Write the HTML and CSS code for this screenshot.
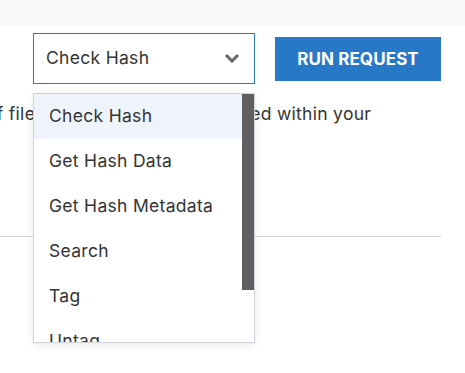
FILE: index.html
```html
<!DOCTYPE html>
<html lang="en">
  <head>
    <meta charset="UTF-8" />
    <meta name="viewport" content="width=device-width, initial-scale=1.0" />
    <link rel="stylesheet" href="styles.css">
    <title>Hash Request</title>
  </head>
  <body>
    <div class="topbar"></div>
    <div class="main">
      <div class="request-row">
        <div class="select">
          <span class="select-value">Check Hash</span>
          <svg class="chevron" width="16" height="10" viewBox="0 0 16 10">
            <path d="M2 2 L8 8 L14 2" fill="none" stroke="#666" stroke-width="3" />
          </svg>
        </div>
        <button class="run-btn">RUN REQUEST</button>
      </div>
      <p class="description">of files that have been processed within your</p>
      <hr class="divider" />

      <div class="dropdown">
        <ul class="options">
          <li class="option active">Check Hash</li>
          <li class="option">Get Hash Data</li>
          <li class="option">Get Hash Metadata</li>
          <li class="option">Search</li>
          <li class="option">Tag</li>
          <li class="option">Untag</li>
          <li class="option">Update Metadata</li>
        </ul>
        <div class="scroll-track">
          <div class="scroll-thumb"></div>
        </div>
      </div>
    </div>
  </body>
</html>
```

FILE: styles.css
```css
body {
  margin: 0;
  padding: 0;
  min-height: 373px;
  font-family: "Inter", "Noto Sans", sans-serif;
  color: #333;
  background-color: white;
}

.topbar {
  height: 26px;
  background-color: #f9fafa;
}

.main {
  position: relative;
  padding: 7px 24px 0 0;
}

.request-row {
  display: flex;
  align-items: center;
  gap: 20px;
  padding-left: 33px;
}

.select {
  box-sizing: border-box;
  width: 222px;
  height: 51px;
  border: 1px solid #2a78c8;
  display: flex;
  align-items: center;
  justify-content: space-between;
  padding: 0 14px 2px 12px;
  font-size: 17.5px;
  letter-spacing: 0.3px;
}

.chevron {
  display: block;
}

.run-btn {
  box-sizing: border-box;
  width: 166px;
  height: 44px;
  background-color: #2878c8;
  border: none;
  color: white;
  font-family: "Inter", sans-serif;
  font-weight: 700;
  font-size: 17px;
  letter-spacing: 0.1px;
  padding: 0;
}

.description {
  margin: 17px 0 0 -14px;
  font-size: 17.5px;
  letter-spacing: 0.3px;
  line-height: 26px;
  white-space: nowrap;
}

.divider {
  margin: 109px 0 0 0;
  border: none;
  border-top: 1px solid #cfd5de;
}

.dropdown {
  position: absolute;
  top: 67px;
  left: 33px;
  box-sizing: border-box;
  width: 222px;
  height: 250px;
  display: flex;
  border: 1px solid #cfd3da;
  background-color: white;
  box-shadow: 0 3px 8px rgba(0, 0, 0, 0.08);
  overflow: hidden;
}

.options {
  flex: 1;
  margin: 0;
  padding: 0;
  list-style: none;
}

.scroll-track {
  width: 12px;
  flex-shrink: 0;
}

.scroll-thumb {
  height: 196px;
  background-color: #5f5f61;
}

.option {
  height: 45px;
  line-height: 43px;
  padding-left: 15px;
  font-size: 17.5px;
  letter-spacing: 0.3px;
  color: #333;
}

.option.active {
  background-color: #eff4fc;
}
```
